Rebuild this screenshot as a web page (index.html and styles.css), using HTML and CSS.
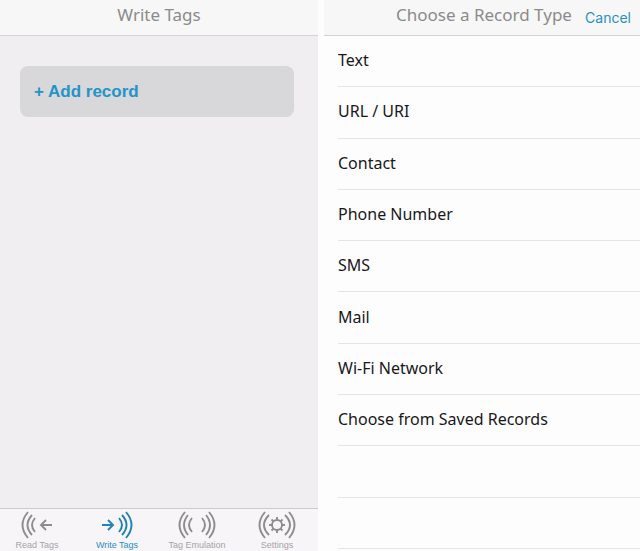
FILE: index.html
```html
<!DOCTYPE html>
<html lang="en">
<head>
<meta charset="utf-8">
<title>Write Tags</title>
<link rel="stylesheet" href="styles.css">
</head>
<body>
<div class="screens">
  <section class="screen screen-write">
    <header class="bar"><h1 class="title">Write Tags</h1></header>
    <main class="content">
      <button class="add" type="button">+ Add record</button>
    </main>
    <nav class="tabs">
      <a class="tab" href="#read">
        <svg class="icon" viewBox="-20 -14 40 28" aria-hidden="true">
          <path d="M-9-13Q-20 0-9 13M-5-10Q-14 0-5 10M-2-7Q-8 0-2 7"/>
          <path d="M15 0H4M9-5L4 0L9 5"/>
        </svg>
        Read Tags
      </a>
      <a class="tab tab-active" href="#write">
        <svg class="icon" viewBox="-20 -14 40 28" aria-hidden="true">
          <path d="M9-13Q20 0 9 13M5-10Q14 0 5 10M2-7Q8 0 2 7"/>
          <path d="M-15 0H-4M-9-5L-4 0L-9 5"/>
        </svg>
        Write Tags
      </a>
      <a class="tab" href="#emulation">
        <svg class="icon" viewBox="-20 -14 40 28" aria-hidden="true">
          <path d="M-12-13Q-23 0-12 13M-9-10Q-17 0-9 10M-5-7Q-11 0-5 7"/>
          <path d="M12-13Q23 0 12 13M9-10Q17 0 9 10M5-7Q11 0 5 7"/>
        </svg>
        Tag Emulation
      </a>
      <a class="tab" href="#settings">
        <svg class="icon" viewBox="-20 -14 40 28" aria-hidden="true">
          <path d="M-12-13Q-23 0-12 13M-8-10Q-18 0-8 10M12-13Q23 0 12 13M8-10Q18 0 8 10"/>
          <circle r="5"/>
          <path d="M0-5V-8M0 5V8M-5 0H-8M5 0H8M-3.5-3.5L-5.5-5.5M3.5-3.5L5.5-5.5M-3.5 3.5L-5.5 5.5M3.5 3.5L5.5 5.5"/>
        </svg>
        Settings
      </a>
    </nav>
  </section>
  <section class="screen screen-choose">
    <header class="bar">
      <h2 class="title">Choose a Record Type</h2>
      <button class="cancel" type="button">Cancel</button>
    </header>
    <ul class="types">
      <li class="type">Text</li>
      <li class="type">URL / URI</li>
      <li class="type">Contact</li>
      <li class="type">Phone Number</li>
      <li class="type">SMS</li>
      <li class="type">Mail</li>
      <li class="type">Wi-Fi Network</li>
      <li class="type">Choose from Saved Records</li>
      <li class="type"></li>
      <li class="type"></li>
    </ul>
  </section>
</div>
</body>
</html>
```
FILE: styles.css
```css
* { box-sizing: border-box; }

body {
  margin: 0;
  background: #fefdfe;
  color: #18181a;
  font-family: "Noto Sans", sans-serif;
}

.screens {
  display: grid;
  grid-template-columns: 1fr 1fr;
  gap: 4px;
  min-height: 100vh;
}

.screen {
  display: flex;
  flex-direction: column;
  min-width: 0;
}

.screen-write { background: #f0eef0; }

.screen-choose { margin-left: 2px; }

.bar {
  display: grid;
  grid-template-columns: 1fr auto 1fr;
  align-items: center;
  height: 36px;
  padding-bottom: 6px;
  background: #f7f7f7;
  border-bottom: 1px solid #d4d3d5;
}

.screen-choose .bar { padding-left: 4px; }

.title {
  grid-column: 2;
  margin: 0;
  color: #8b8b8b;
  font-size: 17px;
  font-weight: 400;
  line-height: 24px;
  white-space: nowrap;
}

.cancel {
  justify-self: end;
  padding: 6px 9px 0 0;
  border: 0;
  background: none;
  color: #2a8fc0;
  font: 14px/20px Inter, sans-serif;
}

.content {
  flex: 1;
  padding: 30px 24px 30px 20px;
}

.add {
  display: block;
  width: 100%;
  padding: 14px;
  border: 0;
  border-radius: 8px;
  background: #d8d7d9;
  color: #2394c8;
  font: bold 17px/23px "Liberation Sans", sans-serif;
  text-align: left;
}

.tabs {
  display: grid;
  grid-template-columns: repeat(4, 1fr);
  margin-left: -3px;
  padding-right: 1px;
  background: #f7f5f8;
  border-top: 1px solid #cccacd;
}

.tab {
  display: flex;
  flex-direction: column;
  align-items: center;
  padding-top: 2px;
  color: #a5a3a6;
  font: 9px/12px "Liberation Sans", sans-serif;
  text-decoration: none;
  white-space: nowrap;
}

.tab-active { color: #2c8fc0; }

.icon {
  width: 40px;
  height: 28px;
  fill: none;
  stroke: #8e8c8f;
  stroke-width: 1.9;
}

.tab-active .icon { stroke: #2182b4; }

.types {
  flex: 1;
  display: grid;
  grid-auto-rows: 1fr;
  margin: 0;
  padding: 0 0 2px 14px;
  list-style: none;
}

.type {
  display: flex;
  align-items: center;
  padding-bottom: 2px;
  border-bottom: 1px solid #e6e4e7;
  font-size: 16px;
  line-height: 24px;
}
```
